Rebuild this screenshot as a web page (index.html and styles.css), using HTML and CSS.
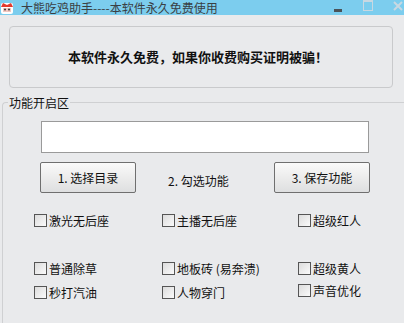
FILE: index.html
```html
<!DOCTYPE html>
<html lang="zh-CN">
<head>
    <meta charset="UTF-8">
    <title>大熊吃鸡助手</title>
    <link rel="stylesheet" href="styles.css">
</head>
<body>
<div class="titlebar">
    <svg class="appicon" width="14" height="14" viewBox="0 0 14 14">
        <rect x="1" y="2" width="12" height="11" rx="2" fill="#fff"/>
        <path d="M1 6 L3 2 L7 4 L11 2 L13 6 Z" fill="#e23a2e"/>
        <rect x="3" y="7" width="8" height="4" fill="#f2c7c0"/>
        <circle cx="5" cy="8.5" r="1" fill="#333"/>
        <circle cx="9" cy="8.5" r="1" fill="#333"/>
    </svg>
    <span class="title">大熊吃鸡助手----本软件永久免费使用</span>
    <div class="winbtns">
        <span class="wb min"></span>
        <span class="wb max"></span>
        <svg class="wb close" width="10" height="10" viewBox="0 0 10 10">
            <path d="M1 1 L9 9 M9 1 L1 9" stroke="#c8d8e2" stroke-width="2"/>
        </svg>
    </div>
</div>

<div class="notice">本软件永久免费，如果你收费购买证明被骗！</div>

<fieldset class="group">
    <legend>功能开启区</legend>
    <input type="text" class="path">
    <div class="steps">
        <button class="btn">1. 选择目录</button>
        <span class="step2">2. 勾选功能</span>
        <button class="btn">3. 保存功能</button>
    </div>
    <div class="opts">
        <label class="opt"><span class="box"></span>激光无后座</label>
        <label class="opt"><span class="box"></span>主播无后座</label>
        <label class="opt"><span class="box"></span>超级红人</label>
        <label class="opt"><span class="box"></span>普通除草</label>
        <label class="opt"><span class="box"></span>地板砖 (易奔溃)</label>
        <label class="opt"><span class="box"></span>超级黄人</label>
        <label class="opt"><span class="box"></span>秒打汽油</label>
        <label class="opt"><span class="box"></span>人物穿门</label>
        <label class="opt up"><span class="box"></span>声音优化</label>
    </div>
</fieldset>
</body>
</html>
```

FILE: styles.css
```css
body {
    margin: 0;
    width: 404px;
    height: 323px;
    overflow: hidden;
    background: #e9eaec;
    font-family: "Noto Sans CJK SC", "DejaVu Sans", sans-serif;
    font-size: 12px;
    color: #111;
}

.titlebar {
    height: 15px;
    background: #7ccdee;
    display: flex;
    align-items: center;
    overflow: hidden;
}
.appicon {
    flex: none;
}
.title {
    margin-left: 7px;
    font-size: 12px;
    line-height: 15px;
    color: #3a3f44;
    white-space: nowrap;
}
.winbtns {
    margin-left: auto;
    display: flex;
    align-items: center;
    height: 15px;
}
.wb.min {
    width: 8px;
    height: 3px;
    background: #4a5258;
    margin-top: 6px;
    margin-right: 21px;
}
.wb.max {
    width: 8px;
    height: 8px;
    border: 1px solid #c8d8e2;
    border-top-width: 2px;
    margin-top: -4px;
    margin-right: 20px;
}
.wb.close {
    margin-top: -4px;
    margin-right: 1px;
}

.notice {
    margin: 11px 11px 0 9px;
    height: 58px;
    border: 1px solid #c9cacc;
    border-radius: 4px;
    display: flex;
    align-items: center;
    justify-content: center;
    font-weight: bold;
    font-size: 13px;
    padding: 0 6px 2px 0;
}

.group {
    margin: 6px -20px 0 2px;
    padding: 0;
    border: 1px solid #cfd0d2;
    border-right: none;
    border-bottom: none;
    border-radius: 4px 0 0 0;
    height: 240px;
}
.group legend {
    margin-left: 5px;
    padding: 0 1px;
    font-size: 12px;
    color: #111;
}

.path {
    display: block;
    margin: 10px 0 0 38px;
    width: 328px;
    height: 32px;
    box-sizing: border-box;
    border: 1px solid #9a9a9a;
    background: #fff;
}

.steps {
    display: flex;
    align-items: center;
    margin: 9px 0 0 37px;
    width: 330px;
}
.btn {
    width: 96px;
    height: 31px;
    border: 1px solid #6f6f6f;
    border-radius: 2px;
    background: linear-gradient(#fafafa, #ececec 50%, #dedfe0);
    font-family: inherit;
    font-size: 12px;
    color: #111;
    padding: 0;
}
.step2 {
    margin: 5px 0 0 32px;
    flex: 1;
}

.opts {
    display: grid;
    grid-template-columns: 128px 136px 100px;
    grid-template-rows: 48px 24px 24px;
    align-items: start;
    margin: 15px 0 0 31px;
}
.opt {
    height: 24px;
    display: flex;
    align-items: center;
    gap: 2px;
    white-space: nowrap;
}
.opt.up {
    margin-top: -2px;
}
.box {
    width: 11px;
    height: 11px;
    border: 1px solid #555;
    background: linear-gradient(135deg, #dcdcdc, #fafafa);
    flex: none;
}
```
